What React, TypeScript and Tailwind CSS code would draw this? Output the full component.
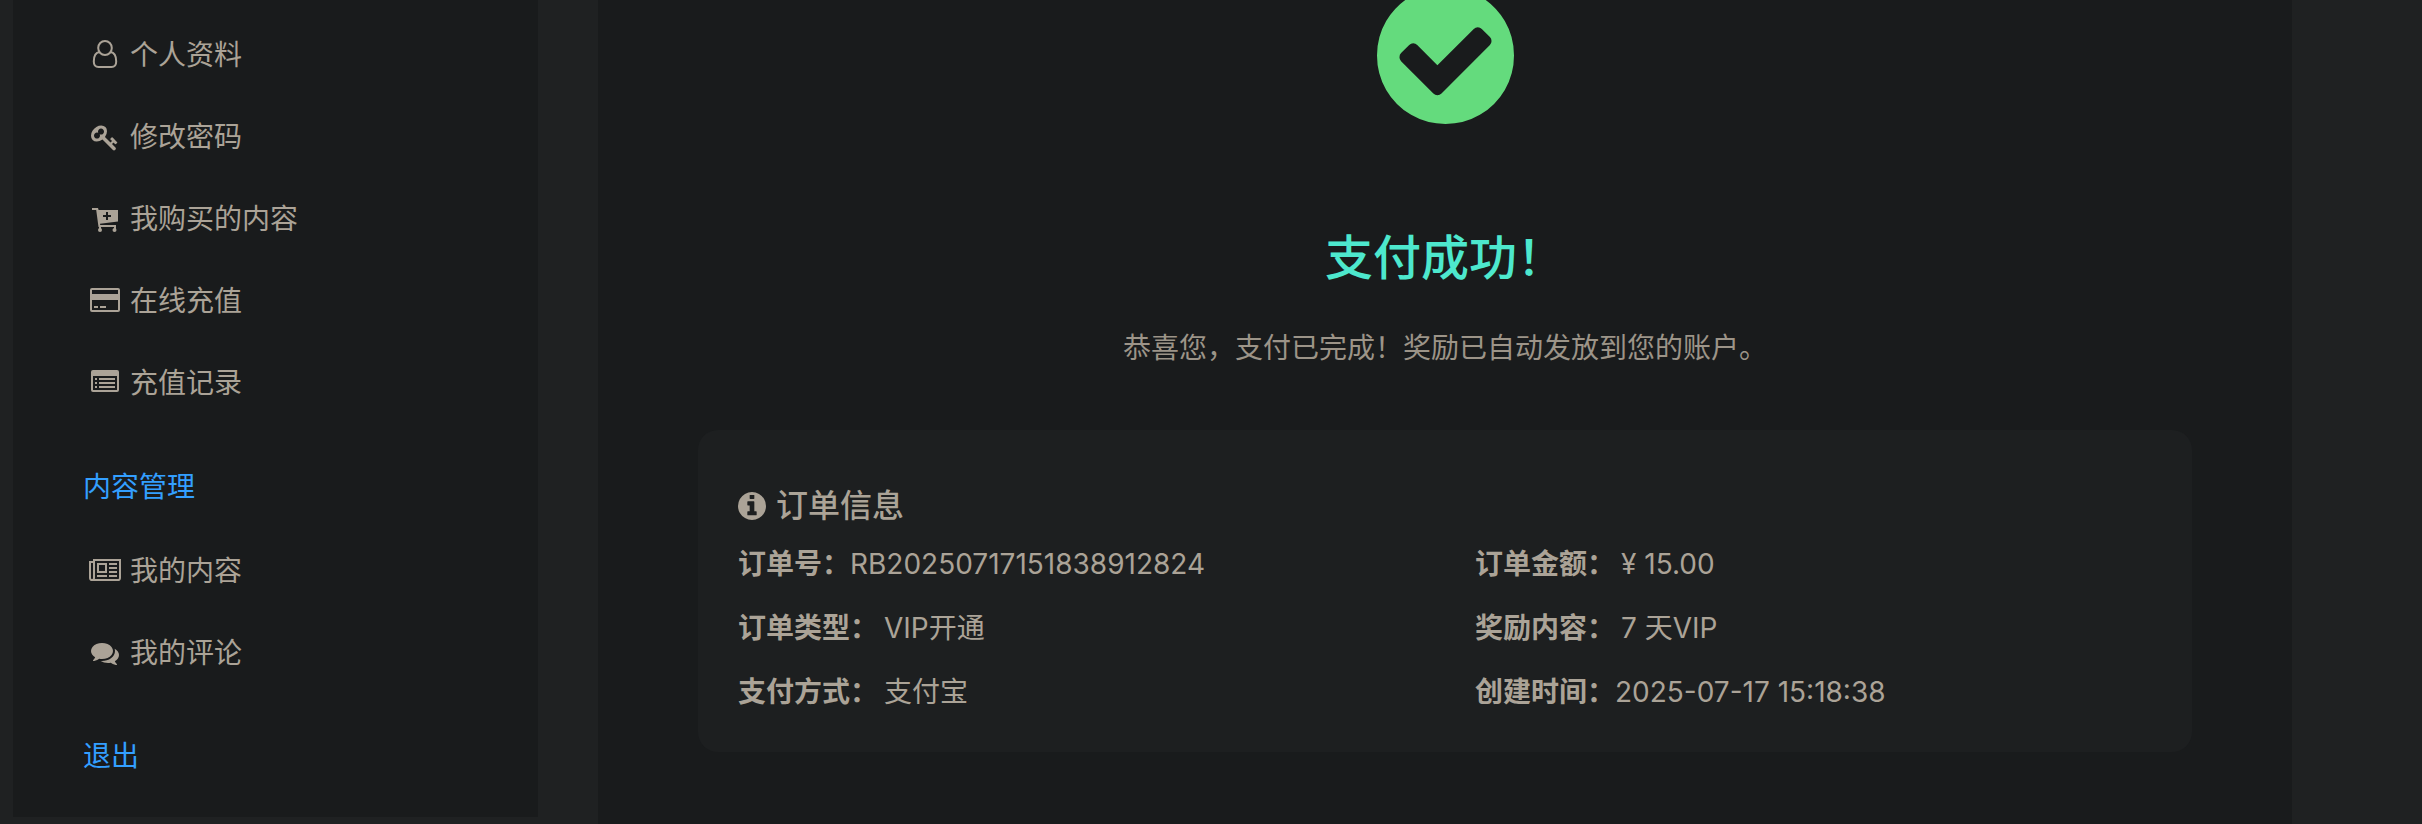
import React from 'react';

type IconProps = { className?: string };

const CIRCLE =
  'M1664 896q0 209-103 385.5t-279.5 279.5-385.5 103-385.5-103-279.5-279.5-103-385.5 103-385.5 279.5-279.5 385.5-103 385.5 103 279.5 279.5 103 385.5z';

function UserIcon({ className }: IconProps) {
  return (
    <svg viewBox="0 0 32 32" className={className} fill="none" stroke="currentColor" strokeWidth="2" aria-hidden="true">
      <ellipse cx="16" cy="9" rx="6.8" ry="7" />
      <path d="M10.500 13C6.500 13.500 4.800 18 4.800 22.500c0 3.500 1.700 5.500 4.700 5.500h13c3 0 4.700-2 4.700-5.500 0-4.500-1.700-9-5.700-9.500" />
    </svg>
  );
}

function KeyIcon({ className }: IconProps) {
  return (
    <svg viewBox="-128 -160 2048 2048" className={className} fill="currentColor" aria-hidden="true">
      <path d="M832 512q0-80-56-136t-136-56-136 56-56 136q0 42 19 83-41-19-83-19-80 0-136 56t-56 136 56 136 136 56 136-56 56-136q0-42-19-83 41 19 83 19 80 0 136-56t56-136zm851 704q0 17-49 66t-66 49q-9 0-28.5-16t-36.5-33-38.5-40-24.5-26l-96 96 220 220q28 28 28 68 0 42-39 81t-81 39q-40 0-68-28l-671-671q-176 131-365 131-163 0-265.5-102.5t-102.5-265.5q0-160 95-313t248-248 313-95q163 0 265.5 102.5t102.5 265.5q0 189-131 365l355 355 96-96q-3-3-26-24.5t-40-38.5-33-36.5-16-28.5q0-17 49-66t66-49q13 0 23 10 6 6 46 44.5t82 79.5 86.5 86 73 78 28.5 41z" />
    </svg>
  );
}

function CartIcon({ className }: IconProps) {
  return (
    <svg viewBox="0 0 32 32" className={className} fill="currentColor" aria-hidden="true">
      <path
        fillRule="evenodd"
        d="M3 5h6l.6 2H29v11.500L11 20.800l.2 1.200H27v2H9.500L7.200 7H3zM17 9v3h-3v2h3v3h2v-3h3v-2h-3V9z"
      />
      <path d="M10 23h2v3h-2zM25 23h2v3h-2z" />
      <circle cx="11" cy="27" r="2" />
      <circle cx="25.500" cy="27" r="2" />
    </svg>
  );
}

function CardIcon({ className }: IconProps) {
  return (
    <svg viewBox="0 0 32 32" className={className} fill="currentColor" aria-hidden="true">
      <path
        fillRule="evenodd"
        d="M3 3h26q2 0 2 2v20q0 2-2 2H3q-2 0-2-2V5q0-2 2-2zM3 5v4h26V5zM3 15v10h26V15z"
      />
      <path d="M5 21h4v2H5zM11 21h6v2h-6z" />
    </svg>
  );
}

function ListIcon({ className }: IconProps) {
  return (
    <svg viewBox="0 0 32 32" className={className} fill="currentColor" aria-hidden="true">
      <path fillRule="evenodd" d="M4 3h24q2 0 2 2v18q0 2-2 2H4q-2 0-2-2V5q0-2 2-2zM4 9v14h24V9z" />
      <path d="M6 11h2v2H6zM10 11h16v2H10zM6 15h2v2H6zM10 15h16v2H10zM6 19h2v2H6zM10 19h16v2H10z" />
    </svg>
  );
}

function NewsIcon({ className }: IconProps) {
  return (
    <svg viewBox="0 0 2048 1792" className={className} fill="currentColor" aria-hidden="true">
      <path d="M1024 512h-384v384h384v-384zm128 640v128h-640v-128h640zm0-768v640h-640v-640h640zm640 768v128h-512v-128h512zm0-256v128h-512v-128h512zm0-256v128h-512v-128h512zm0-256v128h-512v-128h512zm-1536 960v-960h-128v960q0 26 19 45t45 19 45-19 19-45zm1664 0v-1088h-1536v1088q0 33-11 64h1483q26 0 45-19t19-45zm128-1216v1216q0 80-56 136t-136 56h-1664q-80 0-136-56t-56-136v-1088h256v-128h1792z" />
    </svg>
  );
}

function CommentsIcon({ className }: IconProps) {
  return (
    <svg viewBox="-128 -128 2048 2048" className={className} fill="currentColor" aria-hidden="true">
      <path d="M1408 768q0 139-94 257t-256.5 186.5-353.5 68.5q-86 0-176-16-124 88-278 128-36 9-86 16h-3q-11 0-20.5-8t-11.5-21q-1-3-1-6.5t.5-6.5 2-6l2.5-5 3.5-5.5 4-5 4.5-5 4-4.5q5-6 23-25t26-29.5 22.5-29 25-38.5 20.5-44q-124-72-195-177t-71-224q0-139 94-257t256.5-186.5 353.5-68.5 353.5 68.5 256.5 186.5 94 257zm384 256q0 120-71 224.5t-195 176.5q10 24 20.5 44t25 38.5 22.5 29 26 29.5 23 25q1 1 4 4.5t4.5 5 4 5 3.5 5.5l2.5 5 2 6 .5 6.5-1 6.5q-3 14-13 22t-22 7q-50-7-86-16-154-40-278-128-90 16-176 16-271 0-472-132 58 4 88 4 161 0 309-45t264-129q125-92 192-212t67-254q0-77-23-152 129 71 204 178t75 230z" />
    </svg>
  );
}

function InfoIcon({ className }: IconProps) {
  return (
    <svg viewBox="128 128 1536 1536" className={className} fill="currentColor" fillRule="evenodd" aria-hidden="true">
      <path
        d={`M1152 1376v-160q0-14-9-23t-23-9h-96v-512q0-14-9-23t-23-9h-320q-14 0-23 9t-9 23v160q0 14 9 23t23 9h96v320h-96q-14 0-23 9t-9 23v160q0 14 9 23t23 9h448q14 0 23-9t9-23zm-128-896v-160q0-14-9-23t-23-9h-192q-14 0-23 9t-9 23v160q0 14 9 23t23 9h192q14 0 23-9t9-23z${CIRCLE}`}
      />
    </svg>
  );
}

function CheckIcon({ className }: IconProps) {
  return (
    <svg viewBox="128 128 1536 1536" className={className} fill="currentColor" fillRule="evenodd" aria-hidden="true">
      <path
        d={`M1412 734q0-28-18-46l-91-90q-19-19-45-19t-45 19l-408 407-226-226q-19-19-45-19t-45 19l-91 90q-18 18-18 46 0 27 18 45l362 362q19 19 45 19 27 0 46-19l543-543q18-18 18-45z${CIRCLE}`}
      />
    </svg>
  );
}

const accountLinks = [
  { label: '个人资料', icon: UserIcon },
  { label: '修改密码', icon: KeyIcon },
  { label: '我购买的内容', icon: CartIcon },
  { label: '在线充值', icon: CardIcon },
  { label: '充值记录', icon: ListIcon },
];

const contentLinks = [
  { label: '我的内容', icon: NewsIcon },
  { label: '我的评论', icon: CommentsIcon },
];

const orderFields = [
  { label: '订单号：', value: 'RB20250717151838912824', gap: '' },
  { label: '订单金额：', value: '¥ 15.00', gap: 'ml-1.5' },
  { label: '订单类型：', value: 'VIP开通', gap: 'ml-1.5' },
  { label: '奖励内容：', value: '7 天VIP', gap: 'ml-1.5' },
  { label: '支付方式：', value: '支付宝', gap: 'ml-1.5' },
  { label: '创建时间：', value: '2025-07-17 15:18:38', gap: '' },
];

function NavList({ links }: { links: typeof accountLinks }) {
  return (
    <ul>
      {links.map(({ label, icon: Icon }) => (
        <li key={label}>
          <a href="#" className="flex h-[82px] items-center gap-[9px] pl-1.5">
            <Icon className="h-8 w-8 shrink-0" />
            {label}
          </a>
        </li>
      ))}
    </ul>
  );
}

export default function App() {
  return (
    <div className="flex min-h-screen items-stretch overflow-hidden bg-[#1f2122] pl-[13px] font-[Inter,'Noto_Sans_CJK_SC',sans-serif] text-[28px] leading-[40px] text-[#aba397]">
      <aside className="mb-[7px] w-[525px] shrink-0 bg-[#191b1c] pl-[70px] pt-[14px]">
        <nav>
          <NavList links={accountLinks} />
          <h3 className="flex h-[106px] items-center pt-5 text-[#339fff]">内容管理</h3>
          <NavList links={contentLinks} />
          <a href="#" className="flex h-[123px] items-center text-[#339fff]">
            退出
          </a>
        </nav>
      </aside>

      <main className="ml-[60px] mr-[130px] min-w-0 flex-1 bg-[#191b1c] px-[100px]">
        <div className="flex flex-col items-center">
          <CheckIcon className="-mt-[13px] h-[137px] w-[137px] text-[#64db7d]" />
          <h1 className="mt-[98px] text-[48px] font-medium leading-[72px] text-[#4de8cd]">支付成功！</h1>
          <p className="mt-[34px] text-[#9c9488]">恭喜您，支付已完成！奖励已自动发放到您的账户。</p>
        </div>

        <section className="mt-[62px] rounded-[20px] bg-[#1d1f20] px-10 pb-[40px] pt-[52px]">
          <h2 className="flex items-center gap-2.5 text-[32px] font-medium leading-[48px]">
            <InfoIcon className="h-7 w-7" />
            订单信息
          </h2>
          <dl className="mt-[14px] grid grid-cols-2 gap-x-[60px] gap-y-6">
            {orderFields.map(({ label, value, gap }) => (
              <div key={label} className="flex">
                <dt className="font-bold">{label}</dt>
                <dd className={gap}>{value}</dd>
              </div>
            ))}
          </dl>
        </section>
      </main>
    </div>
  );
}
